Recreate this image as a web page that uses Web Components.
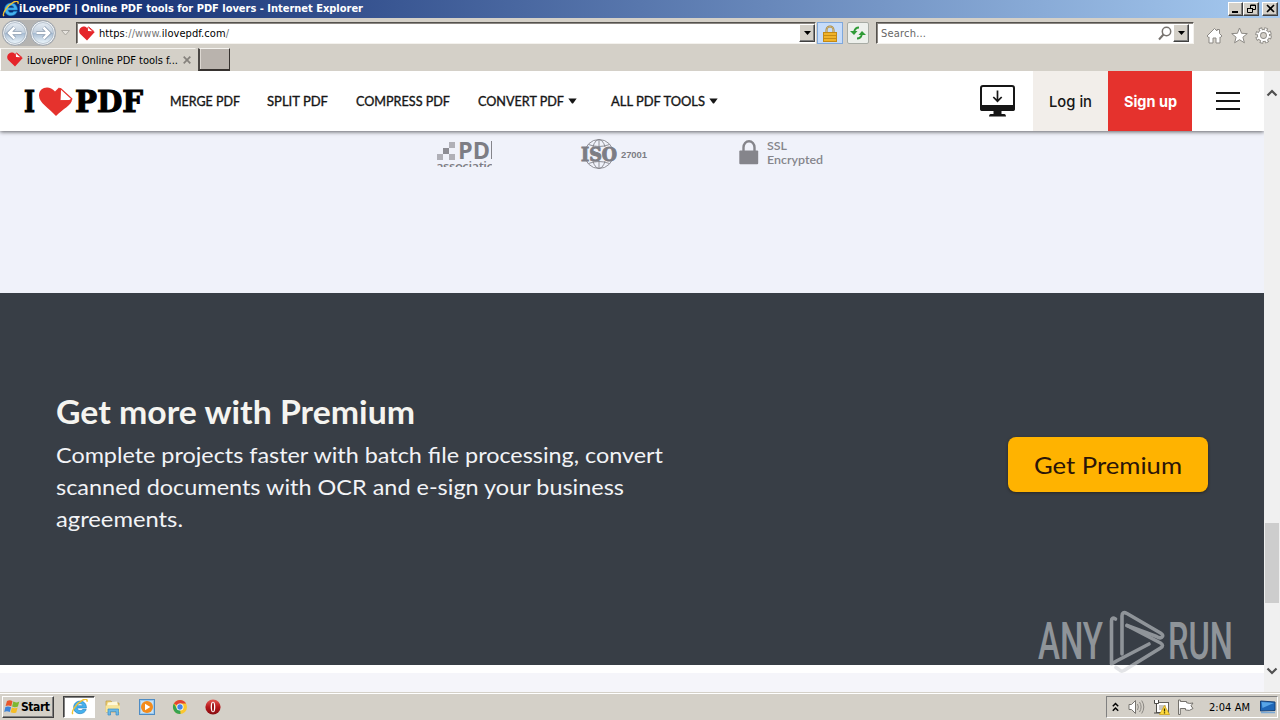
<!DOCTYPE html>
<html lang="en">
<head>
<meta charset="utf-8">
<title>iLovePDF | Online PDF tools for PDF lovers</title>
<style>
    body {
        margin: 0;
        width: 1280px;
        height: 720px;
        overflow: hidden;
        background: #d4d0c8;
        font-family: "DejaVu Sans Condensed", "DejaVu Sans", sans-serif;
        font-size: 11px;
        color: #000;
    }
</style>
</head>
<body>

<browser-window></browser-window>

<script>
//text that spreads its letters over a given width, or with stretch widens the letters
class FitText extends HTMLElement {

    constructor() {
        super();
        this.attachShadow({ mode: 'open' })
    }

    connectedCallback() {
        this.shadowRoot.innerHTML = `
        <style>
            :host { display: inline-block; white-space: nowrap; flex: none; }
            span { display: inline-block; transform-origin: 0 50%; }
        </style>
        <span><slot></slot></span>`
        const width = Number(this.getAttribute('width'))
        const count = this.textContent.length - 1
        const span = this.shadowRoot.querySelector('span')
        const natural = span.getBoundingClientRect().width
        if (this.hasAttribute('stretch')) {
            span.style.transform = `scaleX(${width / natural})`
        } else {
            this.style.letterSpacing = `${(width - natural) / count}px`
        }
        this.style.width = `${width}px`
    }

}
customElements.define('fit-text', FitText)


//all the small pictures, by name
const icons = {
    ie: `<svg width="17" height="16" viewBox="0 1 15 14.500"><path d="M13.800 9.200H5.400c.1 1.500 1.200 2.300 2.800 2.300 1.100 0 1.800-.4 2.300-1.100h3.100c-.8 2.500-2.800 3.900-5.500 3.900-3.500 0-5.900-2.300-5.900-5.700S4.700 2.900 8.100 2.900s5.800 2.500 5.700 6.300zM5.400 7.100h5.100C10.300 5.900 9.500 5.300 8 5.300s-2.300.7-2.600 1.800z" fill="#45b1ee" stroke="#1475b8" stroke-width=".5"/><path d="M1.500 14.700C-.5 12.500 5 4.800 10.300 2c2.900-1.500 4.600-1 3.900 1.500" fill="none" stroke="#f2c230" stroke-width="1.300"/></svg>`,
    heart: `<svg width="16" height="15" viewBox="0 0 16 15"><path d="M8 14.500L1 7.700C-2 3.500 4-2 8 2l1-1 6.500 5.300z" fill="#e5252a"/><path d="M8.800 1.500l.2 3.500 4.300.3z" fill="#fff"/><path d="M9.500.8l5.800 5" stroke="#e5252a"/></svg>`,
    back: `<svg width="26" height="26" viewBox="0 0 26 26"><defs><linearGradient id="g" x2="0" y2="1"><stop stop-color="#e4ebf2"/><stop offset=".48" stop-color="#c3d0de"/><stop offset=".5" stop-color="#a5bad1"/><stop offset="1" stop-color="#eef7fc"/></linearGradient></defs><circle cx="13" cy="13" r="12.300" fill="#f3f6f8" stroke="#8e98a5" stroke-width=".8"/><circle cx="13" cy="13" r="10.500" fill="url(#g)" stroke="#95a4b5" stroke-width=".6"/><path d="M19.500 13H7.500M12.500 7.500L7 13l5.500 5.500" fill="none" stroke="#8294aa" stroke-width="4"/><path d="M19.500 13H7.500M12.500 7.500L7 13l5.500 5.500" fill="none" stroke="#fff" stroke-width="2.600"/></svg>`,
    lock: `<svg width="14" height="17" viewBox="0 0 14 17"><path d="M3.500 8V5a3.500 3.500 0 017 0v3" fill="none" stroke="#a58235" stroke-width="2"/><path d="M3.500 8V5a3.500 3.500 0 017 0v3" fill="none" stroke="#e8d9ac" stroke-width=".6"/><rect x=".5" y="7.500" width="13" height="9" fill="#f0b32a" stroke="#c28916"/><path d="M1 10.500h12M1 13.500h12" stroke="#c68c16"/></svg>`,
    refresh: `<svg width="16" height="14" viewBox="0 0 16 14"><path d="M9 1.500Q5 1.500 4 6M7 12.500q4 0 5-4.500" fill="none" stroke="#2f9b36" stroke-width="1.800"/><path d="M0 5h7.500L4 9zM8.500 9H16l-4-4z" fill="#2f9b36"/></svg>`,
    search: `<svg width="14" height="15" viewBox="0 0 14 15"><circle cx="8.500" cy="5.500" r="4.200" fill="none" stroke="#77736f" stroke-width="1.500"/><path d="M5.500 8.500L1 13.500" stroke="#77736f" stroke-width="2"/></svg>`,
    home: `<svg width="17" height="17" viewBox="0 0 17 17"><path d="M8.500 1.500L1 9l1.500 1.300.5-.4V16h4v-5h3v5h4V9.900l.5.400L16 9l-2.500-2.500V2.500H11V4z" fill="#fff" stroke="#8c8984"/></svg>`,
    star: `<svg width="17" height="17" viewBox="0 0 17 17"><path d="M8.500 1l2.100 5.300 5.700.3-4.400 3.600 1.500 5.600-4.900-3.100-4.900 3.100 1.500-5.600L.7 6.600l5.700-.3z" fill="#fff" stroke="#8c8984"/></svg>`,
    gear: `<svg width="17" height="17" viewBox="0 0 17 17"><circle cx="8.500" cy="8.500" r="6.500" fill="none" stroke="#8c8984" stroke-width="3.600" stroke-dasharray="3.200 1.905"/><circle cx="8.500" cy="8.500" r="4.500" fill="none" stroke="#8c8984" stroke-width="4"/><circle cx="8.500" cy="8.500" r="6.200" fill="none" stroke="#fff" stroke-width="2.400" stroke-dasharray="1.700 3.170" stroke-dashoffset="-.65"/><circle cx="8.500" cy="8.500" r="4.500" fill="none" stroke="#fff" stroke-width="2.200"/></svg>`,
    caret: `<svg width="9" height="6" viewBox="0 0 9 6"><path d="M.300.500h8.400L5 5.500H4z" fill="#161616"/></svg>`,
    desktop: `<svg width="36" height="33" viewBox="0 0 36 33"><rect x="1" y="1" width="33" height="24" rx="2" fill="#fff" stroke="#161616" stroke-width="2"/><path d="M0 20h35v4q0 2-2 2H2q-2 0-2-2zM13.500 26h8v3h3q1.500 0 1.500 2.500H9Q9 29 10.500 29h3z" fill="#161616"/><path d="M17.500 5.500V16M13.300 12l4.200 4.200 4.200-4.200" fill="none" stroke="#161616" stroke-width="1.700"/></svg>`,
    menu: `<svg width="24" height="18" viewBox="0 0 24 18"><path d="M0 1h24M0 9h24M0 17h24" stroke="#161616" stroke-width="2"/></svg>`,
    logoHeart: `<svg width="35" height="31" viewBox="0 0 35 31"><path d="M18 30C11 22 1 17 1 9.500 1 1.500 11-1.500 17 5.500l4-4L34 13c.5 6-9 9.500-16 17z" fill="#e5322d"/><path d="M22.500 2.500L34 13l-2.500 1.500-9.500-.3z" fill="#fff" stroke="#e5322d" stroke-width="1.100" stroke-linejoin="round"/></svg>`,
    ssl: `<svg width="20" height="25" viewBox="0 0 20 25"><path d="M4.500 12V7.500a5.500 6.300 0 0111 0V12" fill="none" stroke="#85858b" stroke-width="2.400"/><rect x=".3" y="10.500" width="18.900" height="13.800" rx="1" fill="#85858b"/></svg>`,
    start: `<svg width="17" height="16" viewBox="0 0 17 16"><path d="M3 2q3-1.500 5.500.2L7.300 7.200Q4.500 6 1.600 7z" fill="#e8562a"/><path d="M9.300 2.600q3 1.700 6-.1l-1.400 4.900q-2.800 1.500-5.800.1z" fill="#7db832"/><path d="M1.400 7.900q2.900-1 5.700.3L5.800 13Q3 11.700.2 12.900z" fill="#3d83d8"/><path d="M7.900 8.500q3 1.300 5.700 0L12.300 13.400q-2.800 1.300-5.700-.1z" fill="#f5bd27"/></svg>`,
    folder: `<svg width="18" height="17" viewBox="0 0 18 17"><path d="M2 2h5l1.500 2H15v9H2z" fill="#eecf70" stroke="#ba9a44" stroke-width=".7"/><path d="M4 3.500l9-1 1 4H3z" fill="#fff8d8"/><path d="M1.500 6.500H16V13H1.500z" fill="#f8e59a"/><path d="M4 16v-6h10.500v6H12v-3.500H6.500V16z" fill="#6bb9e6" stroke="#3b8dc6" stroke-width=".7"/></svg>`,
    media: `<svg width="16" height="16" viewBox="0 0 16 16"><rect x=".5" y=".5" width="15" height="15" fill="#9cc9ee" stroke="#4e8cc4"/><rect x="2" y="2" width="12" height="12" fill="#c7e2f6"/><circle cx="8" cy="8" r="6" fill="#f38b1b"/><path d="M6 4.700v6.600L11.300 8z" fill="#fff"/></svg>`,
    chrome: `<svg width="16" height="16" viewBox="0 0 16 16"><circle cx="8" cy="8" r="7" fill="#fbc72f"/><path d="M8 8L1.900 4.500A7 7 0 0114.100 4.500H8z" fill="#e24334"/><path d="M8 8l.5 7A7 7 0 011.900 4.500L5 9.700z" fill="#36a350"/><circle cx="8" cy="8" r="3.500" fill="#fff"/><circle cx="8" cy="8" r="2.700" fill="#4285e8"/></svg>`,
    opera: `<svg width="16" height="16" viewBox="0 0 16 16"><defs><linearGradient id="o" x2="0" y2="1"><stop stop-color="#e65a54"/><stop offset=".5" stop-color="#b7181c"/><stop offset="1" stop-color="#850b10"/></linearGradient></defs><circle cx="8" cy="8" r="7.600" fill="url(#o)"/><ellipse cx="8" cy="8" rx="2.300" ry="5.300" fill="#fff"/><ellipse cx="8" cy="8" rx="1" ry="4.500" fill="#9a1116"/></svg>`,
    chevrons: `<svg width="7" height="10" viewBox="0 0 7 10"><path d="M.8 4.200l2.700-2.700 2.700 2.700M.8 8.700L3.500 6l2.700 2.700" fill="none" stroke="#000" stroke-width="1.500"/></svg>`,
    sound: `<svg width="17" height="16" viewBox="0 0 17 16"><path d="M1 5.500h2.500l4-4v13l-4-4H1z" fill="#fff" stroke="#77746f"/><path d="M9.500 5q1.700 3 0 6M11.500 3q3.200 5 0 10M13.700 1.500q4.200 6.500 0 13" fill="none" stroke="#8b8883"/></svg>`,
    network: `<svg width="17" height="16" viewBox="0 0 17 16"><rect x="3.500" y="3.500" width="12" height="10" fill="#fff" stroke="#63615d"/><path d="M6 6h7v5H6z" fill="#c8c7c4"/><path d="M1.500 1v3.500h4V1M3.500 4.500v9M1 14h6" fill="#fff" stroke="#4d4b47"/><path d="M11.500 6.500l5 9h-10z" fill="#ffdb3c" stroke="#c89b0b" stroke-width=".7"/><path d="M11.500 9.500v3M11.500 13.300v1.200" stroke="#3b3000" stroke-width="1.300"/></svg>`,
    flag: `<svg width="17" height="16" viewBox="0 0 17 16"><path d="M1.500 1v14.500h1.800V9.500h5.200V11q4 1.500 7.500-1.500l-2-2.700L16 4q-3.500 1-6.500-.3V2.500H3.300V1z" fill="#fff" stroke="#73706b"/></svg>`,
    screen: `<svg width="16" height="16" viewBox="0 0 16 16"><path d="M.5 2l14.500 1v8.500L.5 12z" fill="#1f67b8" stroke="#174278"/><path d="M1.500 3l12.500 1-11.500 5z" fill="#58a5e7"/><path d="M1 13.500h14" stroke="#79a8d6" stroke-width="1.500"/></svg>`
}

class PageIcon extends HTMLElement {

    constructor() {
        super();
        this.attachShadow({ mode: 'open' })
    }

    connectedCallback() {
        this.shadowRoot.innerHTML = `
        <style>
            :host { display: inline-block; flex: none; }
            svg { display: block; }
        </style>
        ${icons[this.getAttribute('name')]}`
    }

}
customElements.define('page-icon', PageIcon)


//raised grey button of the classic theme
class ClassicButton extends HTMLElement {

    constructor() {
        super();
        this.attachShadow({ mode: 'open' })
    }

    connectedCallback() {
        this.shadowRoot.innerHTML = `
        <style>
            :host {
                display: flex;
                align-items: center;
                justify-content: center;
                box-sizing: border-box;
                flex: none;
                background: #d4d0c8;
                border: 1px solid;
                border-color: #fff #404040 #404040 #fff;
                box-shadow: inset -1px -1px #808080;
            }
        </style>
        <slot></slot>`
    }

}
customElements.define('classic-button', ClassicButton)


class TitleBar extends HTMLElement {

    constructor() {
        super();
        this.attachShadow({ mode: 'open' })
    }

    connectedCallback() {
        this.shadowRoot.innerHTML = `
        <style>
            :host {
                display: flex;
                align-items: center;
                box-sizing: border-box;
                height: 18px;
                padding: 0 2px;
                background: linear-gradient(90deg, #0a246a, #a6caf0);
            }
            fit-text { color: #fff; font-weight: bold; font-size: 11px; line-height: 18px; margin-right: auto; }
            classic-button { width: 15px; height: 14px; margin-bottom: 1px; }
            .last { margin-left: 3px; width: 16px; }
        </style>
        <page-icon name="ie"></page-icon>
        <fit-text width="344">iLovePDF | Online PDF tools for PDF lovers - Internet Explorer</fit-text>
        <classic-button><svg width="9" height="9"><path d="M1 8h6" stroke="#000" stroke-width="2"/></svg></classic-button>
        <classic-button style="width:16px"><svg width="9" height="9"><path d="M3.500 5V1h5v4.500H6M3 1.500h6M.500 4v4.500h5V4M0 4.500h6" fill="none" stroke="#000"/></svg></classic-button>
        <classic-button class="last"><svg width="9" height="9"><path d="M1 1l7 7M8 1L1 8" stroke="#000" stroke-width="1.600"/></svg></classic-button>`
    }

}
customElements.define('title-bar', TitleBar)


class AddressBar extends HTMLElement {

    constructor() {
        super();
        this.attachShadow({ mode: 'open' })
    }

    connectedCallback() {
        this.shadowRoot.innerHTML = `
        <style>
            :host {
                display: flex;
                align-items: center;
                box-sizing: border-box;
                height: 30px;
                padding-left: 2px;
            }
            .round { display: flex; gap: 2px; background: #b5b4b2; border-radius: 13px; }
            .forward { transform: scaleX(-1); }
            .history { margin: 0 6px 0 5px; }
            .field {
                display: flex;
                align-items: center;
                box-sizing: border-box;
                height: 22px;
                background: #fff;
                border: 1px solid;
                border-color: #55524e #f4f2ee #f4f2ee #55524e;
                box-shadow: inset 1px 1px #8b8782;
            }
            .address { width: 740px; padding-left: 2px; margin-right: 1px; }
            .address fit-text { margin: 1px auto 0 4px; color: #777; }
            .address b { font-weight: normal; color: #000; }
            .search { width: 318px; padding: 0 4px; margin: 0 12px 0 7px; }
            .search fit-text { margin: 1px auto 0 0; color: #666; }
            .search classic-button { margin-left: 1px; }
            .tool {
                display: flex;
                align-items: center;
                justify-content: center;
                box-sizing: border-box;
                height: 22px;
            }
            .secure { width: 26px; background: #c6dcfa; border: 1px solid #7fa8dc; }
            .reload { width: 22px; margin-left: 4px; background: #edf0ec; border: 1px solid #a8aca5; border-radius: 2px; }
            classic-button { width: 16px; height: 18px; }
            .tools { display: flex; gap: 7.500px; padding-top: 4px; }
        </style>
        <div class="round">
            <page-icon name="back"></page-icon>
            <page-icon name="back" class="forward"></page-icon>
        </div>
        <svg class="history" width="9" height="6"><path d="M.500.500h8l-4 4.500z" fill="#e6e3de" stroke="#aaa7a1"/></svg>
        <div class="field address">
            <page-icon name="heart"></page-icon>
            <fit-text width="130"><b>https</b>://www.<b>ilovepdf.com</b>/</fit-text>
            <classic-button><svg width="7" height="4"><path d="M0 0h7L3.500 4z"/></svg></classic-button>
        </div>
        <div class="tool secure"><page-icon name="lock"></page-icon></div>
        <div class="tool reload"><page-icon name="refresh"></page-icon></div>
        <div class="field search">
            <fit-text width="45">Search...</fit-text>
            <page-icon name="search"></page-icon>
            <classic-button><svg width="7" height="4"><path d="M0 0h7L3.500 4z"/></svg></classic-button>
        </div>
        <div class="tools">
            <page-icon name="home"></page-icon>
            <page-icon name="star"></page-icon>
            <page-icon name="gear"></page-icon>
        </div>`
    }

}
customElements.define('address-bar', AddressBar)


class TabStrip extends HTMLElement {

    constructor() {
        super();
        this.attachShadow({ mode: 'open' })
    }

    connectedCallback() {
        this.shadowRoot.innerHTML = `
        <style>
            :host { display: flex; height: 23px; }
            .tab {
                display: flex;
                align-items: center;
                box-sizing: border-box;
                width: 196px;
                padding-left: 6px;
                border: 1px solid;
                border-color: #f5f3ef transparent transparent #fff;
            }
            fit-text { margin: 1px 5px 0 4px; }
            .new {
                box-sizing: border-box;
                width: 32px;
                height: 23px;
                margin-left: 2px;
                background: #b9b3ad;
                border: 1px solid;
                border-width: 1px 1px 2px 2px;
                border-color: #f5f3ef #36322f #36322f #4b4744;
                box-shadow: inset 1px 0 #ddd8d2;
            }
        </style>
        <div class="tab">
            <page-icon name="heart"></page-icon>
            <fit-text width="151">iLovePDF | Online PDF tools f...</fit-text>
            <svg width="8" height="8"><path d="M.7.7l6.600 6.600M7.300.7L.7 7.300" stroke="#85817c" stroke-width="1.700"/></svg>
        </div>
        <div class="new"></div>`
    }

}
customElements.define('tab-strip', TabStrip)


class SiteHeader extends HTMLElement {

    constructor() {
        super();
        this.attachShadow({ mode: 'open' })
    }

    connectedCallback() {
        this.shadowRoot.innerHTML = `
        <style>
            :host {
                display: flex;
                align-items: center;
                height: 60px;
                flex: none;
                padding-left: 24px;
                background: #fff;
                box-shadow: 0 1px 4px rgba(0, 0, 0, .6);
                position: relative;
                z-index: 1;
                color: #161616;
                font-family: Lato, sans-serif;
            }
            .logo {
                display: flex;
                align-items: center;
                width: 146px;
                color: #000;
                font: bold 29px/60px "DejaVu Serif", serif;
                -webkit-text-stroke: 1.100px #000;
            }
            .logo page-icon { margin: 0 2px 0 3px; }
            .logo fit-text { margin-top: 1px; }
            nav { display: flex; align-items: center; flex: 1; font-size: 12.500px; font-weight: 400; -webkit-text-stroke: .35px; }
            nav fit-text { margin-top: 1px; }
            nav page-icon { margin-left: 4px; }
            .button {
                display: flex;
                align-items: center;
                justify-content: center;
                height: 60px;
                font: 500 15px/60px Inter, sans-serif;
                padding-top: 1px;
                box-sizing: border-box;
            }
            .login { width: 75px; background: #f2eeea; margin-left: 17px; }
            .signup { width: 84px; background: #e5322d; color: #fff; font-weight: 700; margin-right: 24px; }
            .menu { margin-right: 24px; }
        </style>
        <div class="logo"><fit-text width="11" stretch>I</fit-text><page-icon name="logoHeart"></page-icon><fit-text width="68" stretch>PDF</fit-text></div>
        <nav>
            <fit-text width="70" stretch>MERGE PDF</fit-text>
            <fit-text width="61" stretch style="margin-left:27px">SPLIT PDF</fit-text>
            <fit-text width="94" stretch style="margin-left:28px">COMPRESS PDF</fit-text>
            <fit-text width="86" stretch style="margin-left:28px">CONVERT PDF</fit-text>
            <page-icon name="caret"></page-icon>
            <fit-text width="94" stretch style="margin-left:34px">ALL PDF TOOLS</fit-text>
            <page-icon name="caret"></page-icon>
        </nav>
        <page-icon name="desktop"></page-icon>
        <div class="button login"><fit-text width="43" stretch>Log in</fit-text></div>
        <div class="button signup"><fit-text width="53" stretch>Sign up</fit-text></div>
        <page-icon name="menu" class="menu"></page-icon>`
    }

}
customElements.define('site-header', SiteHeader)


class TrustBadges extends HTMLElement {

    constructor() {
        super();
        this.attachShadow({ mode: 'open' })
    }

    connectedCallback() {
        this.shadowRoot.innerHTML = `
        <style>
            :host {
                display: flex;
                align-items: flex-start;
                box-sizing: border-box;
                height: 162px;
                flex: none;
                padding: 7px 0 0 436px;
                background: #f0f2fa;
                color: #85858b;
            }
            svg { display: block; flex: none; overflow: visible; }
            .iso { margin-left: 88px; }
            page-icon { margin: 2px 8px 0 91px; }
            .ssl { font: 600 11.500px/14px Lato, sans-serif; padding-top: 1px; display: flex; flex-direction: column; align-items: flex-start; }
        </style>
        <svg width="56" height="29" viewBox="0 0 56 29">
            <clipPath id="cut"><path d="M0 22h56v7H0z"/></clipPath>
            <path d="M1 16h6v6H1zM13 4h6v6h-6z" fill="#b0b0b7"/>
            <path d="M7 10h6v6H7z" fill="#8d8d94"/>
            <path d="M13 16h6v6h-6z" fill="#b0b0b7"/>
            <text x="22" y="21" textLength="32" lengthAdjust="spacingAndGlyphs" font-family="Open Sans" font-size="24" font-weight="700" fill="#7d7d84">PD</text>
            <path d="M55.500 3v18" stroke="#85858b"/>
            <text x="0" y="33" clip-path="url(#cut)" textLength="57" font-family="Open Sans" font-size="13" font-weight="600" fill="#7d7d84">associatic</text>
        </svg>
        <svg class="iso" width="68" height="32" viewBox="0 0 68 32">
            <g fill="none" stroke="#85858b" stroke-width=".9">
                <circle cx="19" cy="16" r="14.500"/>
                <ellipse cx="19" cy="16" rx="7" ry="14.500"/>
                <path d="M19 1.500v29M8.500 6.500q10.500 4 21 0M8.500 25.500q10.500-4 21 0"/>
            </g>
            <path d="M0 9h38v14H0z" fill="#f0f2fa"/>
            <text x="1" y="22.500" textLength="36" lengthAdjust="spacingAndGlyphs" font-family="DejaVu Serif" font-size="18" font-weight="700" fill="#7d7d84" stroke="#7d7d84" stroke-width="1">ISO</text>
            <text x="41" y="19.500" textLength="26" font-family="Liberation Sans" font-size="9.500" font-weight="700" fill="#7d7d84">27001</text>
        </svg>
        <page-icon name="ssl"></page-icon>
        <div class="ssl">
            <fit-text width="20" stretch>SSL</fit-text>
            <fit-text width="56" stretch>Encrypted</fit-text>
        </div>`
    }

}
customElements.define('trust-badges', TrustBadges)


class PremiumBanner extends HTMLElement {

    constructor() {
        super();
        this.attachShadow({ mode: 'open' })
    }

    connectedCallback() {
        this.shadowRoot.innerHTML = `
        <style>
            :host {
                display: flex;
                align-items: center;
                justify-content: space-between;
                box-sizing: border-box;
                height: 372px;
                flex: none;
                padding: 0 56px;
                background: #383e46;
                color: #f2f3f6;
                font-family: Lato, sans-serif;
            }
            .text { display: flex; flex-direction: column; align-items: flex-start; padding-bottom: 30px; }
            h2 { margin: 0 0 8px; font-size: 32px; line-height: 38px; font-weight: 700; color: #f5f4f0; }
            .text > fit-text { font-size: 22px; line-height: 32px; }
            .cta {
                width: 200px;
                height: 55px;
                margin-bottom: 29px;
                display: flex;
                justify-content: center;
                border-radius: 8px;
                background: #ffb300;
                box-shadow: 0 1px 3px rgba(30, 20, 0, .55);
                color: #2b1508;
                font-size: 24px;
                line-height: 55px;
            }
        </style>
        <div class="text">
            <h2><fit-text width="359" stretch>Get more with Premium</fit-text></h2>
            <fit-text width="607" stretch>Complete projects faster with batch file processing, convert</fit-text>
            <fit-text width="568" stretch>scanned documents with OCR and e-sign your business</fit-text>
            <fit-text width="127" stretch>agreements.</fit-text>
        </div>
        <div class="cta"><fit-text width="148" stretch>Get Premium</fit-text></div>`
    }

}
customElements.define('premium-banner', PremiumBanner)


class ScrollBar extends HTMLElement {

    constructor() {
        super();
        this.attachShadow({ mode: 'open' })
    }

    connectedCallback() {
        this.shadowRoot.innerHTML = `
        <style>
            :host {
                display: flex;
                flex-direction: column;
                align-items: center;
                box-sizing: border-box;
                width: 16px;
                padding: 18px 0 17px;
                background: #f0f0f0;
            }
            .thumb { width: 14px; height: 80px; margin: 426px 0 auto; background: #cdcdcd; }
        </style>
        <svg width="12" height="8"><path d="M1.500 6.500L6 2l4.500 4.500" fill="none" stroke="#505050" stroke-width="2.200"/></svg>
        <div class="thumb"></div>
        <svg width="12" height="8"><path d="M1.500 1.500L6 6l4.500-4.500" fill="none" stroke="#505050" stroke-width="2.200"/></svg>`
    }

}
customElements.define('scroll-bar', ScrollBar)


//watermark over the page
class WaterMark extends HTMLElement {

    constructor() {
        super();
        this.attachShadow({ mode: 'open' })
    }

    connectedCallback() {
        this.shadowRoot.innerHTML = `
        <style>
            :host { display: block; position: absolute; left: 1036px; top: 606px; z-index: 2; opacity: .58; }
            svg { display: block; overflow: visible; }
        </style>
        <svg width="204" height="70" viewBox="0 0 204 70">
            <g font-family="Roboto" font-size="52" font-weight="500" fill="#cfd2d6">
                <text x="2" y="53" textLength="65" lengthAdjust="spacingAndGlyphs">ANY</text>
                <text x="132" y="53" textLength="65" lengthAdjust="spacingAndGlyphs">RUN</text>
            </g>
            <g fill="none" stroke="#cfd2d6" stroke-width="3.600" stroke-linejoin="round" stroke-linecap="round">
                <path d="M79.500 13q-4-2.500-4 2v43l5-3L113 38"/>
                <path d="M86 48V10q0-5 5-2.500L124.500 27q4 2.500 1 4.500-2 1-5-1L91 19.500"/>
                <path d="M91 19.500l33.500 17.500q4 2.500 0 5L92 62l-4 2.500q-3 1.500-5-1l-3-2"/>
            </g>
        </svg>`
    }

}
customElements.define('water-mark', WaterMark)


class TaskBar extends HTMLElement {

    constructor() {
        super();
        this.attachShadow({ mode: 'open' })
    }

    connectedCallback() {
        this.shadowRoot.innerHTML = `
        <style>
            :host {
                display: flex;
                align-items: center;
                box-sizing: border-box;
                height: 28px;
                padding: 1px 2px 0;
                background: #d4d0c8;
                border-top: 1px solid #d4d0c8;
                box-shadow: inset 0 1px #fff;
            }
            classic-button { width: 52px; height: 22px; font-weight: bold; font-size: 12px; }
            classic-button fit-text { margin-right: 2px; }
            .active {
                display: flex;
                justify-content: center;
                align-items: center;
                box-sizing: border-box;
                width: 32px;
                height: 22px;
                margin: 0 9px;
                background: #fff;
                border: 1px solid;
                border-color: #404040 #fff #fff #404040;
                box-shadow: inset 1px 1px #808080;
            }
            .apps { display: flex; gap: 17px; margin-right: auto; align-items: center; }
            .tray {
                display: flex;
                align-items: center;
                box-sizing: border-box;
                width: 172px;
                height: 22px;
                padding-left: 5px;
                border: 1px solid;
                border-color: #808080 #fff #fff #808080;
            }
            .tray fit-text { margin: 0 10px 0 15px; }
        </style>
        <classic-button><page-icon name="start"></page-icon><fit-text width="29">Start</fit-text></classic-button>
        <div class="active"><page-icon name="ie"></page-icon></div>
        <div class="apps">
            <page-icon name="folder"></page-icon>
            <page-icon name="media"></page-icon>
            <page-icon name="chrome"></page-icon>
            <page-icon name="opera"></page-icon>
        </div>
        <div class="tray">
            <page-icon name="chevrons"></page-icon>
            <page-icon name="sound" style="margin-left:9px"></page-icon>
            <page-icon name="network" style="margin-left:8px"></page-icon>
            <page-icon name="flag" style="margin-left:7px"></page-icon>
            <fit-text width="41">2:04 AM</fit-text>
            <page-icon name="screen"></page-icon>
        </div>`
    }

}
customElements.define('task-bar', TaskBar)


class BrowserWindow extends HTMLElement {

    constructor() {
        super();
        this.attachShadow({ mode: 'open' })
    }

    connectedCallback() {
        this.shadowRoot.innerHTML = `
        <style>
            :host { display: flex; flex-direction: column; width: 1280px; height: 720px; }
            .view { display: flex; height: 621px; }
            .page {
                display: flex;
                flex-direction: column;
                width: 1264px;
                background: linear-gradient(#fff 602px, #f5f5fa 602px);
                overflow: hidden;
            }
        </style>
        <title-bar></title-bar>
        <address-bar></address-bar>
        <tab-strip></tab-strip>
        <div class="view">
            <div class="page">
                <site-header></site-header>
                <trust-badges></trust-badges>
                <premium-banner></premium-banner>
            </div>
            <scroll-bar></scroll-bar>
        </div>
        <task-bar></task-bar>
        <water-mark></water-mark>`
    }

}
customElements.define('browser-window', BrowserWindow)
</script>
</body>
</html>
